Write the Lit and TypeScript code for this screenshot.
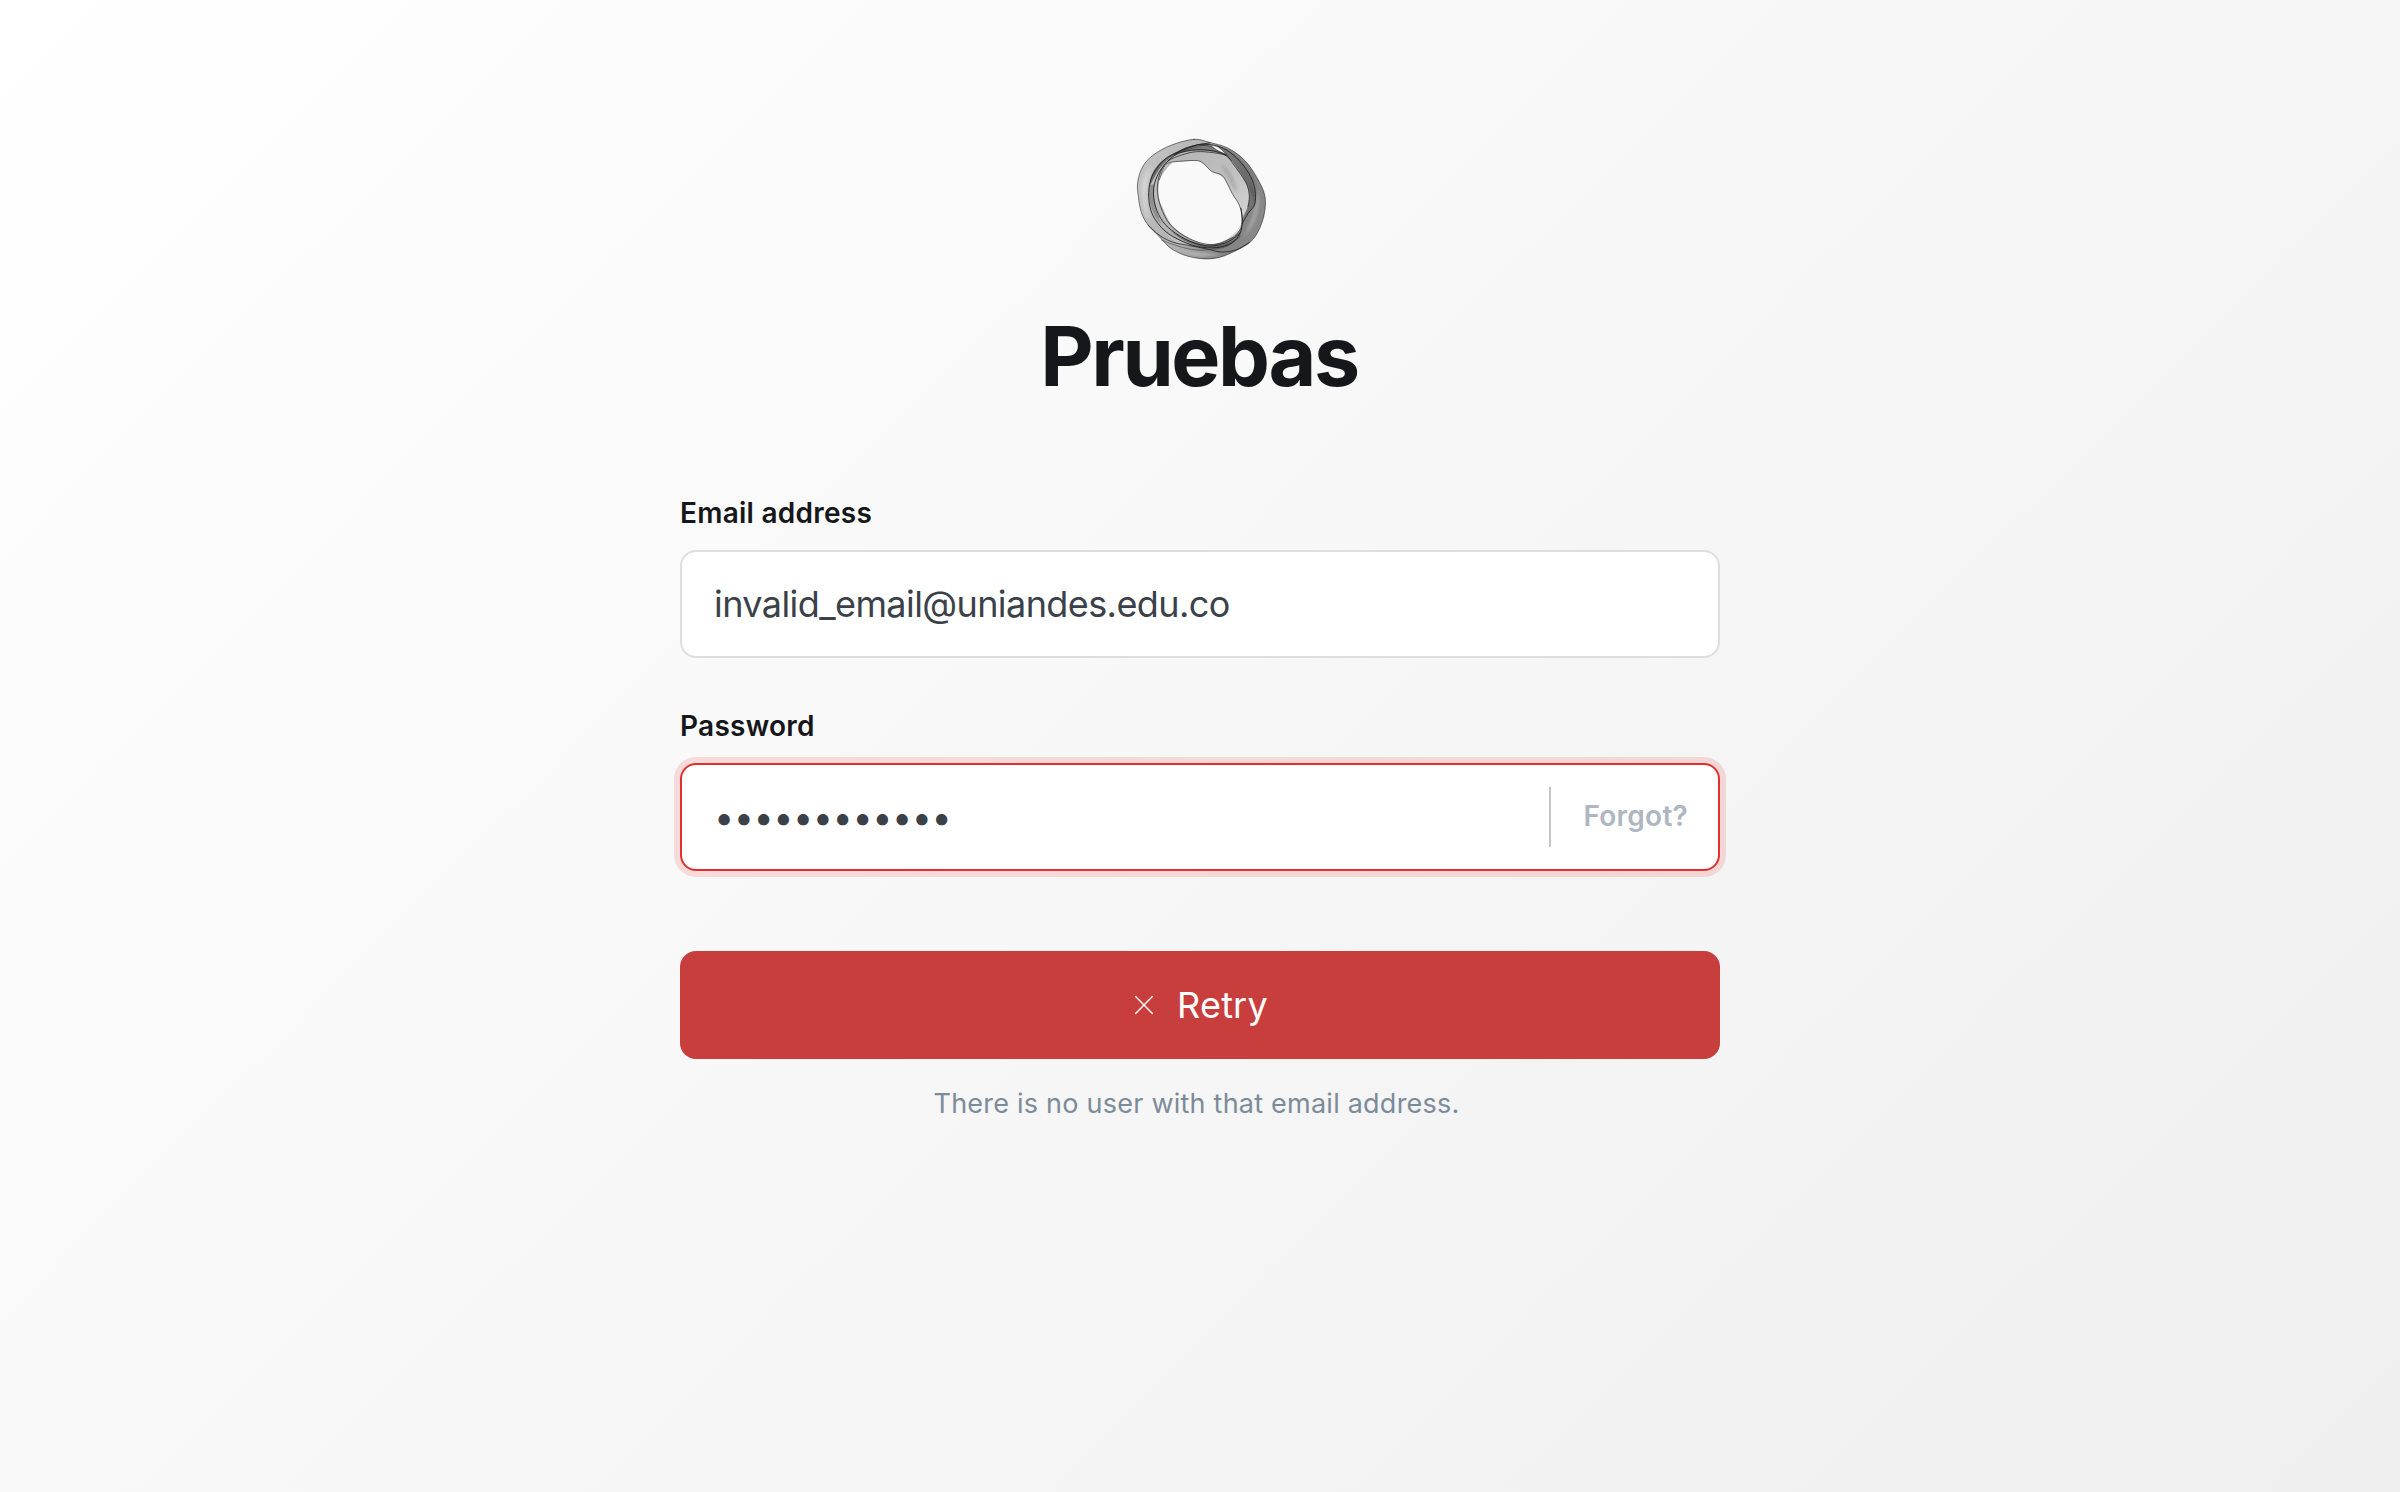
import { LitElement, html, svg, css } from "lit";
import { customElement, property } from "lit/decorators.js";

/** Smooth curve through a flat list of x,y pairs. */
function curve(flat: number[], closed = false): string {
  const p: number[][] = [];
  for (let i = 0; i < flat.length; i += 2) p.push([flat[i], flat[i + 1]]);
  const n = p.length;
  const at = (i: number) => (closed ? p[(i + n) % n] : p[Math.max(0, Math.min(n - 1, i))]);
  let d = `M${p[0][0]} ${p[0][1]}`;
  for (let i = 0; i < (closed ? n : n - 1); i++) {
    const [a, b, c, e] = [at(i - 1), at(i), at(i + 1), at(i + 2)];
    d += `C${b[0] + (c[0] - a[0]) / 6} ${b[1] + (c[1] - a[1]) / 6} ${c[0] - (e[0] - b[0]) / 6} ${c[1] - (e[1] - b[1]) / 6} ${c[0]} ${c[1]}`;
  }
  return closed ? d + "Z" : d;
}

const OUTER = curve([222, 43, 268, 52, 325, 70, 376, 108, 412, 160, 434, 210, 434, 260, 418, 312, 390, 352, 335, 383, 290, 399, 245, 401, 195, 391, 150, 368, 118, 335, 84, 300, 64, 262, 55, 215, 53, 172, 68, 125, 100, 90, 155, 60], true);
const HOLE = curve([148, 113, 190, 108, 232, 107, 252, 117, 275, 139, 305, 150, 320, 172, 337, 206, 358, 240, 366, 275, 362, 310, 335, 338, 290, 356, 250, 357, 205, 339, 165, 310, 147, 288, 128, 248, 116, 215, 118, 165, 132, 127], true);
const VEIL_EDGE = curve([118, 165, 132, 127, 148, 113, 190, 108, 232, 107, 252, 117, 275, 139, 305, 150, 320, 172, 337, 206, 358, 240, 366, 275, 362, 310, 345, 332]);

const LINES: [number, number[]][] = [
  [1, [270, 54, 230, 60, 190, 75, 142, 97, 110, 130, 92, 165, 86, 215, 98, 270, 135, 318, 185, 348, 235, 365, 290, 368, 335, 354, 360, 325, 367, 290, 363, 250]],
  [1, [333, 106, 315, 90, 285, 79, 240, 74, 195, 79, 160, 94, 125, 130, 103, 178, 103, 230, 122, 280, 155, 316, 210, 349, 270, 363, 325, 350, 360, 324]],
  [0.8, [318, 90, 280, 83, 230, 80, 185, 90, 145, 108, 122, 140, 112, 190, 122, 245, 150, 298, 195, 334, 250, 356, 295, 356, 340, 336]],
  [1, [165, 88, 195, 70, 245, 58, 292, 63, 330, 82, 365, 115, 392, 155, 405, 195, 404, 238, 385, 264, 367, 295]],
  [0.75, [292, 63, 318, 86, 338, 115, 362, 148, 382, 182, 388, 215, 384, 245]],
  [0.75, [240, 60, 272, 64, 295, 78, 320, 90]],
  [0.85, [84, 300, 120, 332, 160, 352, 210, 362, 262, 372, 305, 381, 350, 374, 388, 352]],
  [0.5, [124, 345, 170, 362, 220, 374, 265, 374, 320, 364, 360, 335]],
];

@customElement("ring-logo")
export class RingLogo extends LitElement {
  static styles = css`
    :host { display: block; width: 160px; height: 145px; }
    svg { display: block; width: 100%; height: 100%; }
    .line { fill: none; stroke: #1c1c1c; stroke-linecap: round; stroke-linejoin: round; }
  `;

  render() {
    return html`
      <svg viewBox="0 0 480 435" aria-hidden="true">
        <defs>
          <linearGradient id="band" x1="0.05" y1="0.3" x2="0.95" y2="0.65">
            <stop offset="0" stop-color="#c2c2c2"></stop>
            <stop offset="0.5" stop-color="#aeaeae"></stop>
            <stop offset="0.78" stop-color="#828282"></stop>
            <stop offset="1" stop-color="#888"></stop>
          </linearGradient>
          <linearGradient id="veil" x1="0" y1="0" x2="1" y2="1">
            <stop offset="0" stop-color="#b4b4b4"></stop>
            <stop offset="0.5" stop-color="#bebebe"></stop>
            <stop offset="1" stop-color="#d4d4d4"></stop>
          </linearGradient>
          <filter id="soft" x="-20%" y="-20%" width="140%" height="140%"><feGaussianBlur stdDeviation="5"></feGaussianBlur></filter>
        </defs>
        <path fill="url(#band)" fill-rule="evenodd" d="${OUTER + HOLE}"></path>
        <path fill="url(#veil)" d="M118 165C150 102 200 80 250 84C290 82 318 88 333 104C362 138 388 180 388 222C386 246 376 262 366 280C363 246 350 226 337 206C326 192 323 176 315 164C305 150 290 148 275 139C262 130 250 108 230 107C205 107 175 110 148 113C136 118 126 140 118 165Z"></path>
        <path fill="#8b8b8b" opacity="0.4" filter="url(#soft)" d="M302 118C328 130 346 160 352 202C334 190 322 155 302 118Z"></path>
        <path fill="#f0f0f0" opacity="0.4" filter="url(#soft)" d="M66 175C72 150 84 132 96 125C78 160 76 240 92 290C72 270 62 220 66 175Z"></path>
        <path fill="#565656" opacity="0.8" d="M88 185C92 145 110 115 142 97C175 73 225 58 270 58C245 66 195 73 165 91C125 110 110 145 88 185Z"></path>
        <path fill="#555" opacity="0.6" d="M165 90C200 66 250 58 292 64C270 64 290 78 320 90C270 72 210 72 165 90Z"></path>
        <path fill="#5c5c5c" opacity="0.6" d="M292 63C340 72 378 116 394 158C408 185 412 220 402 242C398 205 382 176 362 148C345 125 325 82 292 63Z"></path>
        <path fill="#777" opacity="0.45" d="M292 63C335 68 370 92 392 135C412 165 420 200 404 238C410 190 380 100 292 63Z"></path>
        <path fill="#4d4d4d" opacity="0.35" d="M388 170C403 190 405 215 402 240C392 256 378 266 367 292C384 250 392 210 388 170Z"></path>
        <path fill="#b8b8b8" opacity="0.6" filter="url(#soft)" d="M415 190C424 240 410 300 372 337C392 295 408 250 415 190Z"></path>
        <path fill="#c4c4c4" opacity="0.7" filter="url(#soft)" d="M175 374C215 384 265 384 305 388C275 398 215 396 175 374Z"></path>
        <path fill="#f6f6f6" d="M274 64C290 62 302 70 312 84C298 80 286 74 274 64Z"></path>
        <path fill="#d0d0d0" opacity="0.8" d="M366 292C362 320 335 346 290 358C322 345 352 325 366 292Z"></path>
        <path fill="#4f4f4f" opacity="0.6" d="M150 315C190 342 230 360 275 363C315 360 345 350 366 322C350 352 318 368 280 370C225 366 182 348 150 315Z"></path>
        <path fill="#c9c9c9" opacity="0.7" d="M135 320C155 337 185 350 222 363C190 366 155 350 135 320Z"></path>
        <path fill="#5a5a5a" opacity="0.45" d="M88 180C82 220 94 268 124 298C108 260 98 220 103 178Z"></path>
        <g class="line" stroke-width="2.6">
          <path opacity="0.65" d="${OUTER}"></path>
          <path opacity="0.65" d="${VEIL_EDGE}"></path>
          ${LINES.map(([o, pts]) => svg`<path opacity="${o}" d="${curve(pts)}"></path>`)}
        </g>
      </svg>
    `;
  }
}

@customElement("form-field")
export class FormField extends LitElement {
  @property() label = "";
  @property() value = "";
  @property({ type: Boolean }) secret = false;
  @property({ type: Boolean }) invalid = false;
  @property() action = "";

  static styles = css`
    :host { display: flex; flex-direction: column; gap: 21px; }
    .label { font-size: 28px; line-height: 32px; font-weight: 600; letter-spacing: 0.25px; color: #15171a; }
    .box {
      box-sizing: border-box; height: 108px; border: 2px solid #dddedf; border-radius: 16px; background: #fff;
      display: flex; align-items: center; padding: 0 30px 0 32px; color: #3a4149;
    }
    .box.invalid { border-color: #e62e2f; box-shadow: 0 0 0 6px rgba(226, 47, 47, 0.15); }
    .value { flex: 1; font-size: 36px; line-height: 44px; letter-spacing: -0.58px; }
    .value.secret { letter-spacing: -0.48px; }
    .divider { width: 2px; height: 60px; background: #c5c6c7; }
    .action { margin-left: 32px; padding-bottom: 3px; font-size: 28px; line-height: 34px; font-weight: 600; letter-spacing: 0.25px; color: #aeb7c1; }
  `;

  render() {
    const shown = this.secret ? "•".repeat(this.value.length) : this.value;
    return html`
      <div class="label">${this.label}</div>
      <div class="box ${this.invalid ? "invalid" : ""}">
        <span class="value ${this.secret ? "secret" : ""}">${shown}</span>
        ${this.action ? html`<span class="divider"></span><span class="action">${this.action}</span>` : null}
      </div>
    `;
  }
}

@customElement("app-root")
export class AppRoot extends LitElement {
  static styles = css`
    :host {
      display: flex; flex-direction: column; align-items: center; box-sizing: border-box;
      height: 1492px; padding-top: 125px;
      font-family: Inter, "Liberation Sans", sans-serif;
      background: linear-gradient(135deg, #fff 0%, #efefef 100%);
    }
    h1 { margin: 41px 0 0; padding-right: 2px; font-size: 82.5px; line-height: 90px; font-weight: 700; letter-spacing: -2.4px; color: #15171a; }
    form { width: 1040px; margin-top: 96px; display: flex; flex-direction: column; }
    .second { margin-top: 52px; }
    button {
      margin-top: 80px; height: 108px; padding: 0 0 0 2px; border: 0; border-radius: 16px; background: #c83e3c; color: #fff;
      font: 400 36px/44px Inter, "Liberation Sans", sans-serif; letter-spacing: 0.2px;
      display: flex; align-items: center; justify-content: center; gap: 23px;
    }
    .cross { width: 20px; height: 20px; }
    .message { margin: 29px 0 0; padding-right: 7px; text-align: center; font-size: 27px; line-height: 32px; letter-spacing: 0.23px; color: #7c8b9a; }
  `;

  render() {
    return html`
      <ring-logo></ring-logo>
      <h1>Pruebas</h1>
      <form>
        <form-field label="Email address" value="invalid_email@uniandes.edu.co"></form-field>
        <form-field class="second" label="Password" value="············" secret invalid action="Forgot?"></form-field>
        <button type="button">
          <svg class="cross" viewBox="0 0 20 20" fill="none" stroke="#fff" stroke-width="1.4" stroke-linecap="round"><path d="M1.6 1.6 18.4 18.4M18.4 1.6 1.6 18.4"></path></svg>
          <span>Retry</span>
        </button>
        <p class="message">There is no user with that email address.</p>
      </form>
    `;
  }
}
